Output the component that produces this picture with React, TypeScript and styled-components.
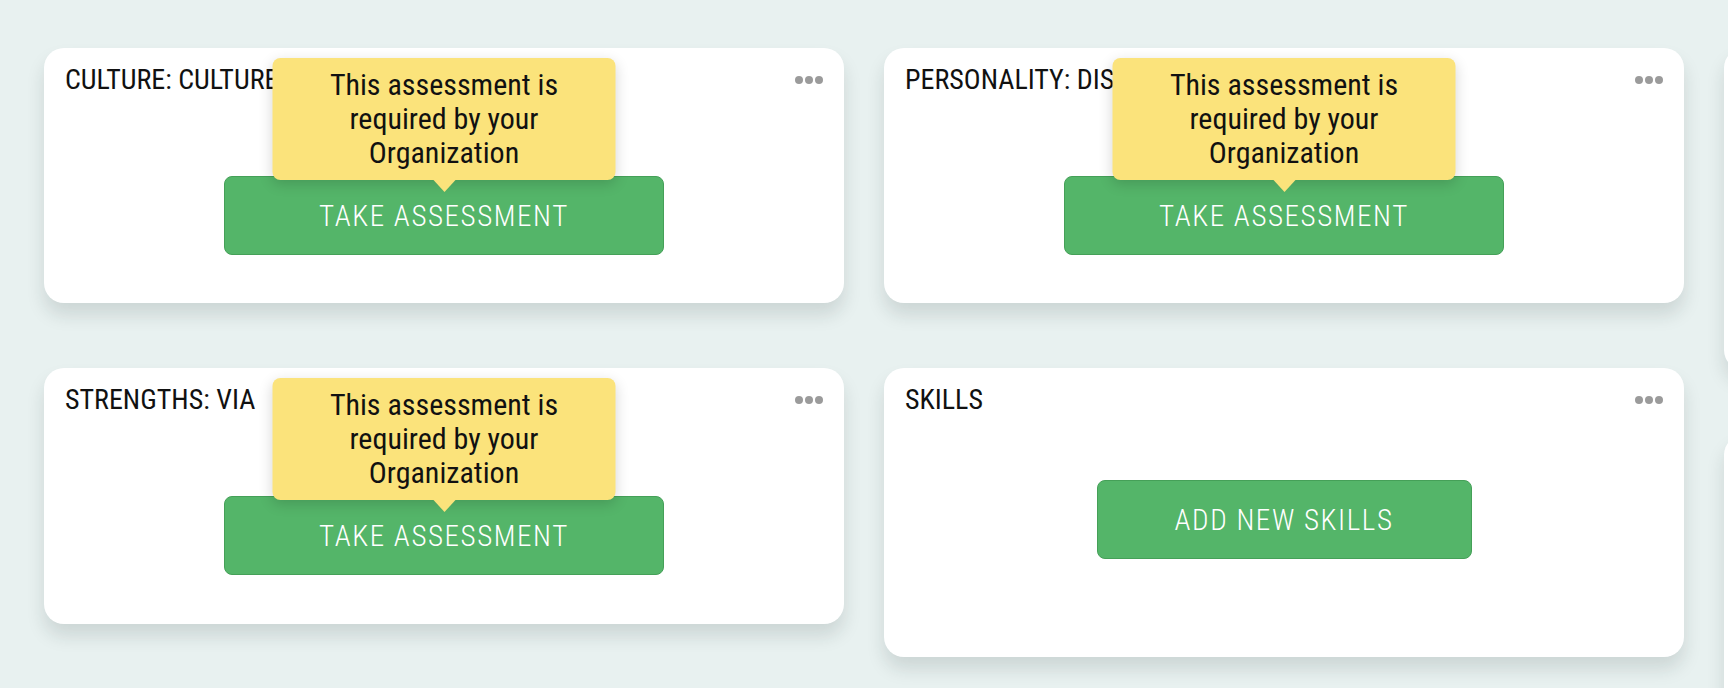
import styled, { createGlobalStyle } from "styled-components";

const GlobalStyle = createGlobalStyle`
  html, body {
    margin: 0;
    padding: 0;
    background: #e8f1f0;
    overflow: hidden;
  }
  body {
    font-family: "Roboto Condensed", "Liberation Sans Narrow", "DejaVu Sans Condensed", Roboto, sans-serif;
  }
`;

// LAYOUT
const Board = styled.div`
  display: flex;
  align-items: flex-start;
  gap: 40px;
  padding: 48px 0 0 44px;
  width: max-content;
  height: 688px;
  box-sizing: border-box;
`;

const Column = styled.div`
  display: flex;
  flex-direction: column;
  gap: 65px;
  width: 800px;
`;

const Card = styled.div`
  position: relative;
  background: #fff;
  border-radius: 20px;
  padding: 16px 21px 0;
  box-sizing: border-box;
  box-shadow: 0 12px 18px rgba(20, 40, 40, 0.13);
  display: flex;
  flex-direction: column;
`;

const PlaceholderCard = styled(Card)<{ $height: number }>`
  height: ${(p) => p.$height}px;
`;

const CardHeader = styled.div`
  display: flex;
  justify-content: space-between;
  align-items: center;
  height: 32px;
`;

const CardTitle = styled.h3`
  margin: 0;
  font-size: 28px;
  font-weight: 400;
  line-height: 32px;
  color: #111;
  text-transform: uppercase;
  white-space: nowrap;
`;

const MoreButton = styled.button`
  display: flex;
  gap: 2px;
  padding: 0;
  border: none;
  background: transparent;
  cursor: pointer;

  span {
    width: 8px;
    height: 8px;
    border-radius: 50%;
    background: #9b9b9b;
  }
`;

const CardBody = styled.div<{ $top: number; $bottom: number }>`
  display: flex;
  justify-content: center;
  padding: ${(p) => `${p.$top}px 0 ${p.$bottom}px`};
`;

const ActionWrap = styled.div`
  position: relative;
  display: flex;
`;

const ActionButton = styled.button<{ $width: number }>`
  width: ${(p) => p.$width}px;
  height: 79px;
  border-radius: 8px;
  border: 1px solid #45a058;
  background: #54b569;
  color: #fff;
  font-family: inherit;
  font-size: 29px;
  font-weight: 300;
  letter-spacing: 1.6px;
  text-transform: uppercase;
  cursor: pointer;
`;

const Tooltip = styled.div`
  position: absolute;
  left: 50%;
  bottom: calc(100% - 4px);
  transform: translateX(-50%);
  z-index: 2;
  width: 343px;
  box-sizing: border-box;
  padding: 10px 20px;
  background: #fbe37b;
  border-radius: 8px;
  box-shadow: 0 4px 14px rgba(0, 0, 0, 0.16);
  color: #111;
  font-size: 30px;
  line-height: 34px;
  text-align: center;

  &::after {
    content: "";
    position: absolute;
    left: 50%;
    top: 100%;
    transform: translateX(-50%);
    border-left: 11px solid transparent;
    border-right: 11px solid transparent;
    border-top: 12px solid #fbe37b;
  }
`;

// TYPES
interface CardData {
  title: string;
  action: string;
  buttonWidth: number;
  required: boolean;
  top: number;
  bottom: number;
}

const columns: CardData[][] = [
  [
    { title: "Culture: Culture Fit", action: "Take Assessment", buttonWidth: 440, required: true, top: 80, bottom: 48 },
    { title: "Strengths: VIA", action: "Take Assessment", buttonWidth: 440, required: true, top: 80, bottom: 49 },
  ],
  [
    { title: "Personality: DISC", action: "Take Assessment", buttonWidth: 440, required: true, top: 80, bottom: 48 },
    { title: "Skills", action: "Add New Skills", buttonWidth: 375, required: false, top: 64, bottom: 98 },
  ],
];

const placeholderHeights = [322, 300];

function AssessmentCard({ card }: { card: CardData }) {
  return (
    <Card>
      <CardHeader>
        <CardTitle>{card.title}</CardTitle>
        <MoreButton aria-label="More options">
          <span />
          <span />
          <span />
        </MoreButton>
      </CardHeader>
      <CardBody $top={card.top} $bottom={card.bottom}>
        <ActionWrap>
          {card.required && (
            <Tooltip>This assessment is required by your Organization</Tooltip>
          )}
          <ActionButton $width={card.buttonWidth}>{card.action}</ActionButton>
        </ActionWrap>
      </CardBody>
    </Card>
  );
}

export default function App() {
  return (
    <>
      <GlobalStyle />
      <Board>
        {columns.map((col, i) => (
          <Column key={i}>
            {col.map((card) => (
              <AssessmentCard key={card.title} card={card} />
            ))}
          </Column>
        ))}
        <Column>
          {placeholderHeights.map((h, i) => (
            <PlaceholderCard key={i} $height={h} />
          ))}
        </Column>
      </Board>
    </>
  );
}
